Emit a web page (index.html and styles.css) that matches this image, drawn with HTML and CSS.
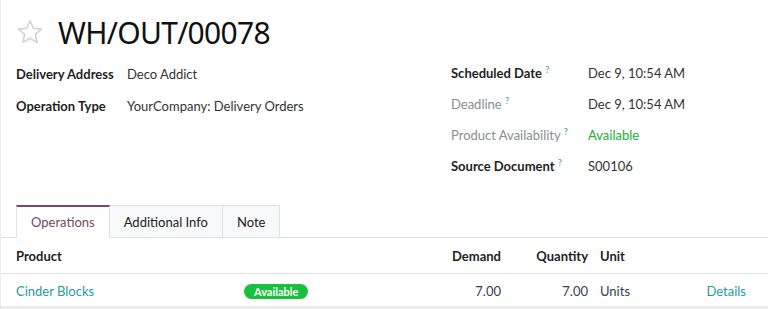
FILE: index.html
```html
<!DOCTYPE html>
<html lang="en">
<head>
    <meta charset="UTF-8">
    <title>WH/OUT/00078</title>
    <link rel="stylesheet" href="styles.css">
</head>
<body>
    <div class="sheet">
        <div class="title-row">
            <svg class="star" width="28" height="28" viewBox="0 0 24 24">
                <path d="M12 2.5l2.9 6.3 6.9.7-5.2 4.6 1.5 6.8L12 17.4l-6.1 3.5 1.5-6.8-5.2-4.6 6.9-.7z" fill="none" stroke="#d0d2d5" stroke-width="1.4" stroke-linejoin="round"/>
            </svg>
            <h1>WH/OUT/00078</h1>
        </div>

        <div class="groups">
            <div class="group left">
                <div class="label">Delivery Address</div>
                <div class="value">Deco Addict</div>
                <div class="label">Operation Type</div>
                <div class="value">YourCompany: Delivery Orders</div>
            </div>
            <div class="group right">
                <div class="label">Scheduled Date <sup>?</sup></div>
                <div class="value">Dec 9, 10:54 AM</div>
                <div class="label muted">Deadline <sup>?</sup></div>
                <div class="value">Dec 9, 10:54 AM</div>
                <div class="label muted">Product Availability <sup>?</sup></div>
                <div class="value green">Available</div>
                <div class="label">Source Document <sup>?</sup></div>
                <div class="value">S00106</div>
            </div>
        </div>

        <div class="tabs">
            <div class="tab active">Operations</div>
            <div class="tab">Additional Info</div>
            <div class="tab">Note</div>
        </div>

        <table class="lines">
            <colgroup>
                <col class="w-product">
                <col class="w-badge">
                <col class="w-demand">
                <col class="w-qty">
                <col class="w-unit">
                <col>
            </colgroup>
            <thead>
                <tr>
                    <th class="c-product">Product</th>
                    <th></th>
                    <th class="num">Demand</th>
                    <th class="num">Quantity</th>
                    <th class="c-unit">Unit</th>
                    <th class="c-action"></th>
                </tr>
            </thead>
            <tbody>
                <tr>
                    <td class="c-product"><a href="#">Cinder Blocks</a></td>
                    <td><span class="badge">Available</span></td>
                    <td class="num">7.00</td>
                    <td class="num">7.00</td>
                    <td class="c-unit">Units</td>
                    <td class="c-action"><a href="#">Details</a></td>
                </tr>
            </tbody>
        </table>
    </div>
</body>
</html>
```

FILE: styles.css
```css
body {
    margin: 0;
    background: #ebebeb;
    font-family: Lato, sans-serif;
    font-size: 13px;
    color: #374151;
}
.sheet {
    background: white;
    margin-left: 1px;
    height: 306px;
    overflow: hidden;
}
.title-row {
    display: flex;
    align-items: center;
    padding: 14px 16px 0 15px;
    height: 36px;
}
.star {
    margin-right: 14px;
}
h1 {
    margin: 0;
    font-family: "Noto Sans", sans-serif;
    font-size: 30px;
    font-weight: 400;
    letter-spacing: -0.7px;
    color: #111;
}
.groups {
    display: grid;
    grid-template-columns: 435px 1fr;
    padding: 7px 0 0 15px;
}
.group {
    display: grid;
    align-items: center;
    align-content: start;
}
.group.left {
    grid-template-columns: 111px 1fr;
    grid-auto-rows: 32px;
    padding-top: 1px;
}
.group.right {
    grid-template-columns: 137px 1fr;
    grid-auto-rows: 31px;
}
.label {
    font-weight: 700;
    color: #1f1f1f;
}
.label.muted {
    font-weight: 400;
    color: #8a8d91;
}
sup {
    font-size: 9px;
    color: #5aa9c9;
    font-weight: 700;
}
.value {
    color: #333;
}
.value.green {
    color: #1cad35;
}
.tabs {
    display: flex;
    margin-top: 24px;
    padding-left: 15px;
    border-bottom: 1px solid #dee2e6;
}
.tab {
    padding: 8px 14px;
    height: 15px;
    background: #f8f9fa;
    border: 1px solid #dee2e6;
    border-left: none;
    margin-bottom: -1px;
    color: #222;
}
.tab:first-child {
    border-left: 1px solid #dee2e6;
}
.tab.active {
    background: white;
    color: #714b67;
    border-top: 2px solid #714b67;
    border-bottom-color: white;
    padding: 7px 14px 8px 14px;
}
.lines {
    width: 100%;
    border-collapse: collapse;
    table-layout: fixed;
}
.w-product { width: 235px; }
.w-badge { width: 185px; }
.w-demand { width: 88px; }
.w-qty { width: 87px; }
.w-unit { width: 85px; }
.lines th, .lines td {
    height: 35px;
    padding: 0 8px;
    text-align: left;
    border-bottom: 1px solid #dee2e6;
    white-space: nowrap;
}
.lines th {
    font-weight: 700;
    color: #1f1f1f;
}
.lines td {
    height: 31px;
    padding-top: 1px;
}
.lines .c-product {
    padding-left: 15px;
}
.lines .num {
    text-align: right;
}
.lines .c-unit {
    padding-left: 4px;
}
.lines .c-action {
    text-align: right;
    padding-right: 22px;
}
a {
    color: #1f9ba3;
    text-decoration: none;
}
.badge {
    display: inline-block;
    background: #17c13e;
    color: white;
    font-size: 11px;
    font-weight: 700;
    padding: 1px 10px;
    border-radius: 10px;
}
```
